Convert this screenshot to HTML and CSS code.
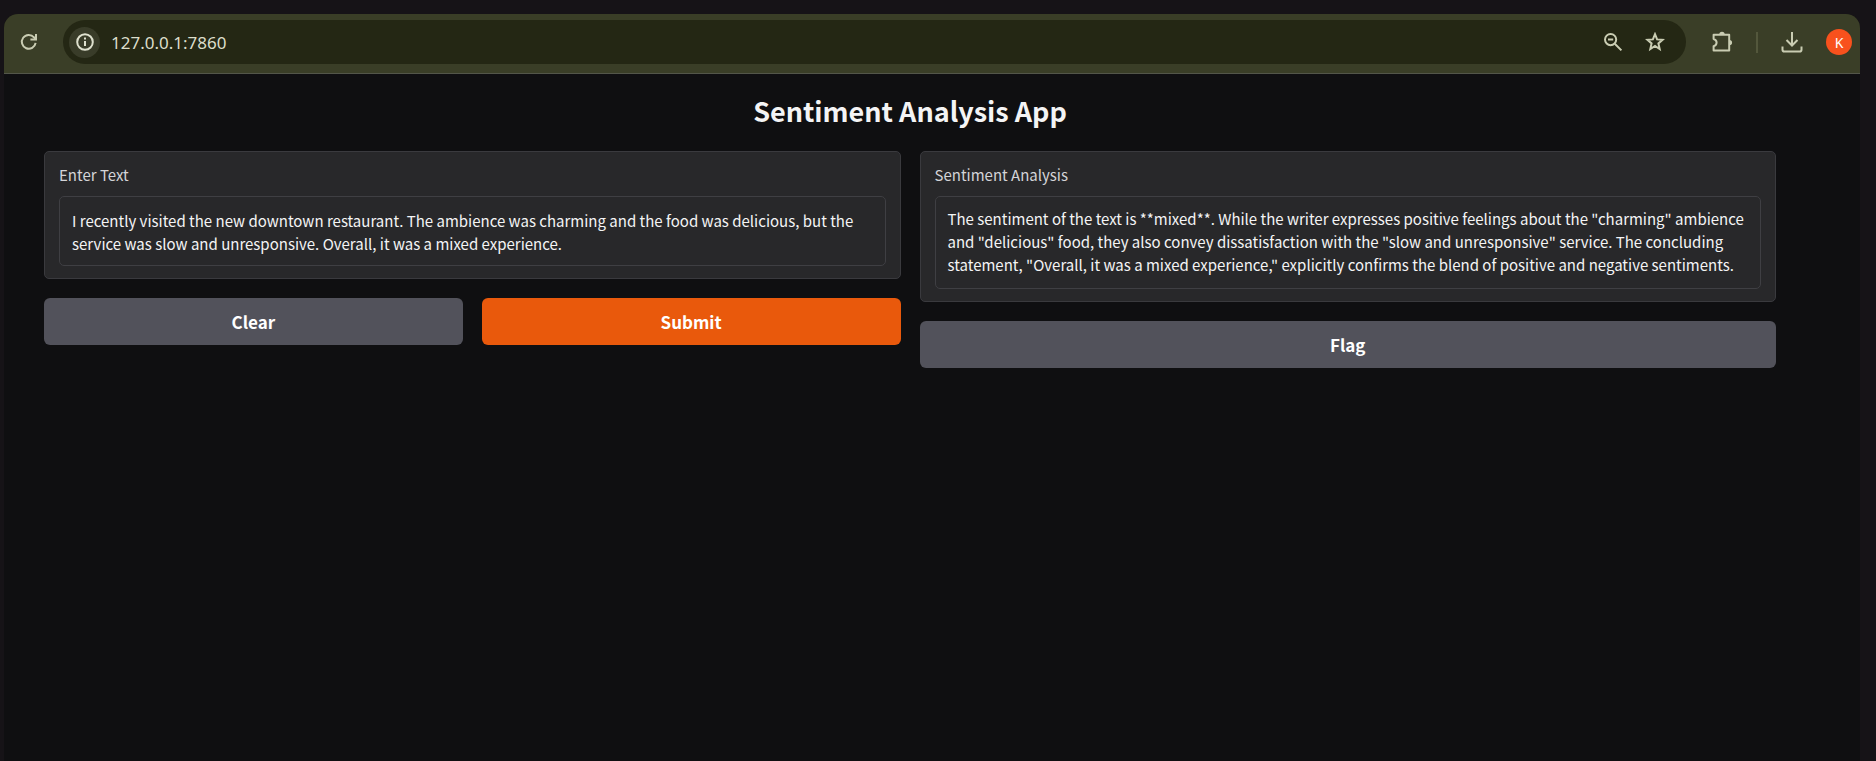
FILE: index.html
```html
<!DOCTYPE html>
<html lang="en">
<head>
<meta charset="utf-8">
<meta name="viewport" content="width=device-width, initial-scale=1">
<title>Sentiment Analysis App</title>
<link rel="stylesheet" href="styles.css">
</head>
<body>
<div class="window">
  <header class="toolbar">
    <button class="icon-button reload" type="button" aria-label="Reload">
      <svg width="20" height="20" viewBox="0 0 20 20"><path d="M16.6 10.8A6.9 6.9 0 1 1 15 5.3L16.6 7"/><path d="M17 2v5.6h-5.6"/></svg>
    </button>
    <div class="omnibox">
      <button class="icon-button site-info" type="button" aria-label="View site information">
        <svg width="20" height="20" viewBox="0 0 20 20"><circle cx="10" cy="10" r="7.8"/><path d="M10 9v5M10 5.6v2"/></svg>
      </button>
      <input class="url" type="text" value="127.0.0.1:7860" aria-label="Address">
      <button class="icon-button" type="button" aria-label="Zoom">
        <svg width="20" height="20" viewBox="0 0 20 20"><circle cx="7.6" cy="7.6" r="5.6"/><path d="M11.8 11.8l6.6 6.6M5 7.6h5.2"/></svg>
      </button>
      <button class="icon-button" type="button" aria-label="Bookmark this tab">
        <svg width="20" height="20" viewBox="0 0 20 20"><path d="M10 2.2l2.1 5.2 5.5.4-4.2 3.6 1.3 5.600L10 14l-4.700 3 1.300-5.600-4.200-3.600 5.500-.4z"/></svg>
      </button>
    </div>
    <div class="actions">
      <button class="icon-button" type="button" aria-label="Extensions">
        <svg width="24" height="24" viewBox="0 0 24 24"><path stroke-linejoin="round" d="M3.6 4.7h15.6v15.8H3.6v-4.3c2.2-.6 3-1.9 3-3.6s-.8-3-3-3.6z"/><path class="solid" d="M9.3 4.5a2.7 2.7 0 0 1 5.4 0zM19.4 9.9a2.7 2.7 0 0 1 0 5.4z"/></svg>
      </button>
      <span class="divider"></span>
      <button class="icon-button" type="button" aria-label="Downloads">
        <svg width="24" height="24" viewBox="0 0 24 24"><path d="M12 2v13M6.5 10l5.5 5.5 5.500-5.500M2.500 16.500v3.200q0 1.800 1.800 1.800h15.400q1.800 0 1.800-1.800v-3.200"/></svg>
      </button>
      <button class="avatar" type="button" aria-label="Profile">K</button>
    </div>
  </header>
  <main class="page">
    <h1 class="title">Sentiment Analysis App</h1>
    <div class="columns">
      <form class="column">
        <div class="panel">
          <label class="label" for="input">Enter Text</label>
          <textarea class="field field-input" id="input" rows="2">I recently visited the new downtown restaurant. The ambience was charming and the food was delicious, but the service was slow and unresponsive. Overall, it was a mixed experience.</textarea>
        </div>
        <div class="buttons">
          <button class="button" type="button">Clear</button>
          <button class="button primary" type="button">Submit</button>
        </div>
      </form>
      <section class="column">
        <div class="panel">
          <label class="label" for="output">Sentiment Analysis</label>
          <textarea class="field" id="output" rows="3" readonly>The sentiment of the text is **mixed**. While the writer expresses positive feelings about the "charming" ambience and "delicious" food, they also convey dissatisfaction with the "slow and unresponsive" service. The concluding statement, "Overall, it was a mixed experience," explicitly confirms the blend of positive and negative sentiments.</textarea>
        </div>
        <div class="buttons">
          <button class="button" type="button">Flag</button>
        </div>
      </section>
    </div>
  </main>
</div>
</body>
</html>
```
FILE: styles.css
```css
* { box-sizing: border-box; }

body {
  margin: 0;
  min-height: 100vh;
  display: flex;
  background: #161317;
  color: #f4f4f5;
  font-family: "Noto Sans CJK SC", "Noto Sans", sans-serif;
}

button, input, textarea { font: inherit; }
button { border: 0; padding: 0; cursor: pointer; }

.window {
  flex: 1;
  display: flex;
  flex-direction: column;
  margin: 14px 16px 0 4px;
  border-radius: 14px 14px 0 0;
  overflow: hidden;
  background: #0f0f11;
}

.toolbar {
  display: flex;
  align-items: center;
  height: 60px;
  padding: 0 8px 3px 15px;
  background: #3a3e27;
  border-bottom: 1px solid #53564a;
}

.icon-button {
  display: flex;
  align-items: center;
  justify-content: center;
  background: none;
  color: #c9ccb2;
}

.icon-button svg {
  fill: none;
  stroke: currentColor;
  stroke-width: 2;
}

.icon-button .solid { fill: currentColor; stroke: none; }

.omnibox {
  flex: 1;
  display: flex;
  align-items: center;
  gap: 22px;
  height: 44px;
  margin: 0 24px;
  padding: 0 21px 0 6px;
  border-radius: 22px;
  background: #242714;
}

.site-info {
  width: 31px;
  height: 31px;
  border-radius: 50%;
  background: #393c29;
  color: #dfe1cf;
}

.url {
  flex: 1;
  min-width: 0;
  margin-left: -11px;
  padding: 0;
  border: 0;
  outline: 0;
  background: none;
  color: #dcdecb;
  font-family: "Noto Sans", sans-serif;
  font-size: 17px;
}

.actions { display: flex; align-items: center; gap: 22px; }

.divider { width: 2px; height: 21px; background: #53573c; }

.avatar {
  width: 26px;
  height: 26px;
  border-radius: 50%;
  background: #f8511d;
  color: #fff;
  font-family: "Noto Sans", sans-serif;
  font-size: 14px;
}

.page { padding: 17px 84px 40px 40px; }

.title {
  margin: 0 0 20px;
  font-size: 27px;
  line-height: 40px;
  font-weight: 600;
  text-align: center;
}

.columns { display: flex; align-items: flex-start; gap: 19px; }

.column {
  flex: 1;
  min-width: 0;
  display: flex;
  flex-direction: column;
  gap: 19px;
}

.panel {
  padding: 11px 14px 12px;
  border: 1px solid #3a3a3e;
  border-radius: 5px;
  background: #28282a;
}

.label {
  display: block;
  margin-bottom: 10px;
  color: #d4d4d8;
  font-size: 15px;
  line-height: 23px;
}

.field {
  display: block;
  width: 100%;
  padding: 10px 12px 12px;
  border: 1px solid #3f3f43;
  border-radius: 5px;
  outline: 0;
  resize: none;
  overflow: hidden;
  background: #28282a;
  color: #f4f4f5;
  font-size: 15px;
  line-height: 23px;
}

.field-input { padding: 12px 12px 10px; }

.buttons { display: flex; gap: 19px; }

.button {
  flex: 1;
  height: 47px;
  border-radius: 6px;
  background: #52525b;
  color: #fff;
  font-size: 17px;
  font-weight: 600;
}

.primary { background: #e9590c; }
```
